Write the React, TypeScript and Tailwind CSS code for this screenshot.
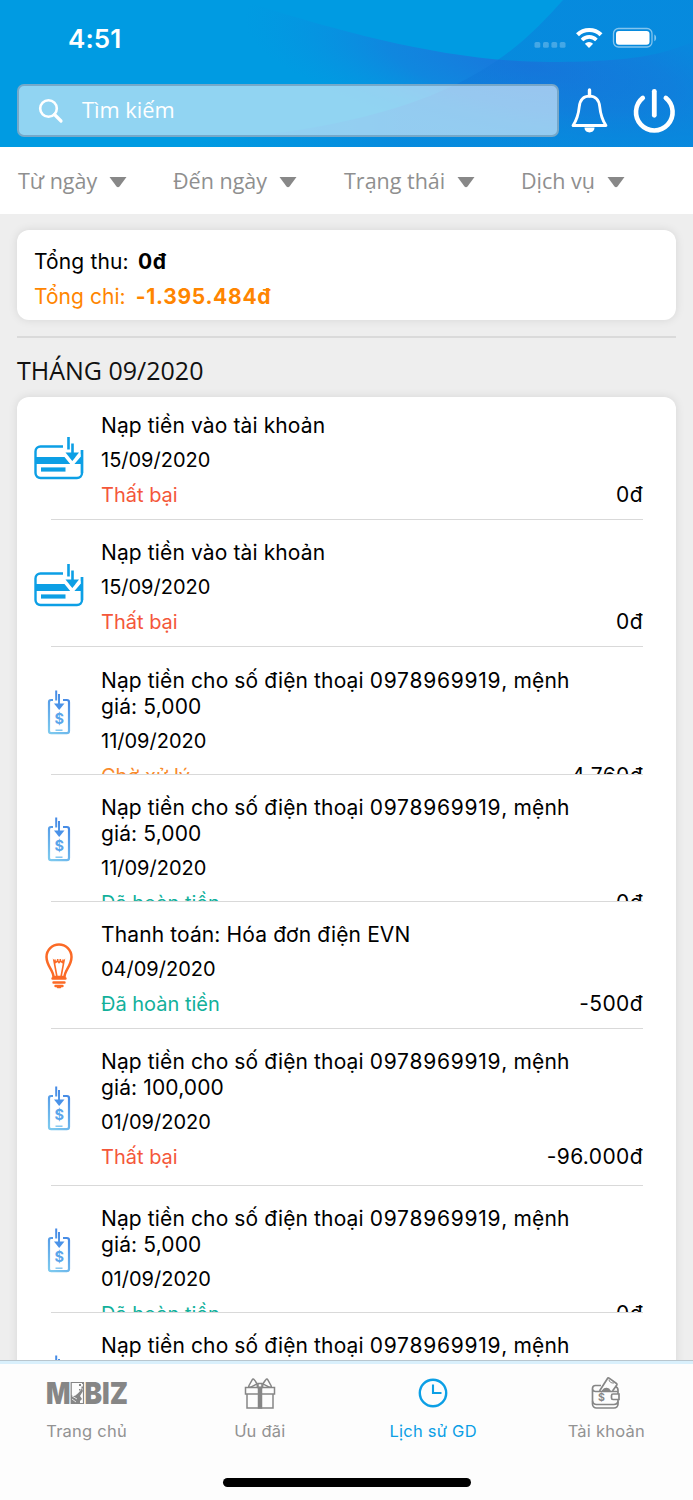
import type { ReactNode } from 'react';
import clsx from 'clsx';

type IconKind = 'card' | 'phone' | 'bulb';
type Status = 'failed' | 'pending' | 'refunded';

interface Transaction {
  icon: IconKind;
  title: string;
  phone?: string;
  note?: string;
  date: string;
  status: Status;
  amount: string;
  size: string;
}

const STATUS: Record<Status, { label: string; color: string }> = {
  failed: { label: 'Thất bại', color: 'text-[#f4573a]' },
  pending: { label: 'Chờ xử lý', color: 'text-[#f98a2b]' },
  refunded: { label: 'Đã hoàn tiền', color: 'text-[#12b09b]' },
};

const TOPUP = 'Nạp tiền cho số điện thoại ';

const transactions: Transaction[] = [
  { icon: 'card', title: 'Nạp tiền vào tài khoản', date: '15/09/2020', status: 'failed', amount: '0đ', size: 'h-[123px] pt-4' },
  { icon: 'card', title: 'Nạp tiền vào tài khoản', date: '15/09/2020', status: 'failed', amount: '0đ', size: 'h-[127px] pt-5' },
  { icon: 'phone', title: TOPUP, phone: '0978969919', note: ', mệnh giá: 5,000', date: '11/09/2020', status: 'pending', amount: '-4.760đ', size: 'h-[128px] pt-[21px]' },
  { icon: 'phone', title: TOPUP, phone: '0978969919', note: ', mệnh giá: 5,000', date: '11/09/2020', status: 'refunded', amount: '0đ', size: 'h-[127px] pt-5' },
  { icon: 'bulb', title: 'Thanh toán: Hóa đơn điện EVN', date: '04/09/2020', status: 'refunded', amount: '-500đ', size: 'h-[127px] pt-5' },
  { icon: 'phone', title: TOPUP, phone: '0978969919', note: ', mệnh giá: 100,000', date: '01/09/2020', status: 'failed', amount: '-96.000đ', size: 'h-[157px] pt-5' },
  { icon: 'phone', title: TOPUP, phone: '0978969919', note: ', mệnh giá: 5,000', date: '01/09/2020', status: 'refunded', amount: '0đ', size: 'h-[127px] pt-5' },
  { icon: 'phone', title: TOPUP, phone: '0978969919', note: ', mệnh giá: 5,000', date: '01/09/2020', status: 'refunded', amount: '0đ', size: 'h-[127px] pt-5' },
];

const filters = [
  { label: 'Từ ngày', width: 'w-[155px]' },
  { label: 'Đến ngày', width: 'w-[171px]' },
  { label: 'Trạng thái', width: 'w-[177px]' },
  { label: 'Dịch vụ', width: 'w-[150px]' },
];

function CardIcon() {
  return (
    <svg width="50" height="45" viewBox="0 0 50 45" fill="none" stroke="#0c9fe5">
      <path d="M29 10.500H6.500a5 5 0 0 0-5 5V37a5 5 0 0 0 5 5H43a5 5 0 0 0 5-5V14" strokeWidth="2.400" />
      <path d="M2 21h46v7H2Z" fill="#0c9fe5" stroke="none" />
      <path d="M31 18.500 38.300 27.500 46.500 18" stroke="#fff" strokeWidth="4" />
      <path d="M7 33.500h24.500" strokeWidth="4.200" />
      <path d="M34.500 1v12.500M38.500 7.500v10" strokeWidth="2.600" />
      <path d="M31.500 16.500h13.500L38.300 25Z" fill="#0c9fe5" stroke="none" />
      <path d="M48 14v23" strokeWidth="2.400" />
    </svg>
  );
}

function PhoneIcon() {
  return (
    <svg width="24" height="46" viewBox="0 0 24 46" fill="none">
      <defs>
        <linearGradient id="phoneBlue" x1="0" y1="40" x2="24" y2="8" gradientUnits="userSpaceOnUse">
          <stop stopColor="#7cc8ee" />
          <stop offset="1" stopColor="#3f83e4" />
        </linearGradient>
      </defs>
      <g stroke="url(#phoneBlue)">
        <path d="M6 11H4.200A2.200 2.200 0 0 0 2 13.200V42a2.200 2.200 0 0 0 2.200 2.200h15.600A2.200 2.200 0 0 0 22 42V13.200a2.200 2.200 0 0 0-2.200-2.200H16" strokeWidth="2.200" />
        <path d="M9.200 1.500v10M12 5v11" strokeWidth="2" />
        <path d="M8.500 41.200h7" strokeWidth="1.300" />
      </g>
      <path d="M7 14.500h10.500L12.200 21Z" fill="#4a92e8" />
      <text x="12.200" y="34.500" textAnchor="middle" fontFamily="Inter, sans-serif" fontSize="14.500" fontWeight="700" fill="#5aa6eb">$</text>
    </svg>
  );
}

function BulbIcon() {
  return (
    <svg width="28" height="46" viewBox="0 0 28 46" fill="none" stroke="#fb6a26">
      <path d="M8.500 34C8.500 27 1.500 23 1.500 14a12.500 12.500 0 0 1 25 0c0 9-7 13-7 20Z" strokeWidth="2.500" />
      <path d="M12 34 9 18l1.500 1.500 2-1.500 1.500 1.500 1.500-1.500 2 1.500L19 18l-3 16" strokeWidth="1.600" />
      <path d="M10 16.500v2.500M12.700 16v3M15.300 16v3M18 16.500v2.500" strokeWidth="1.600" />
      <path d="M7.500 35.500h13M8.500 39.500h11M10.500 43h7" strokeWidth="2.400" strokeLinecap="round" />
      <path d="M12.500 44.500h3" strokeWidth="1.500" strokeLinecap="round" />
    </svg>
  );
}

const ICONS: Record<IconKind, ReactNode> = {
  card: <CardIcon />,
  phone: <PhoneIcon />,
  bulb: <BulbIcon />,
};

function TransactionRow({ item, first }: { item: Transaction; first: boolean }) {
  const status = STATUS[item.status];
  return (
    <div className={clsx('relative flex shrink-0 overflow-hidden pl-[17px] pr-[33px]', item.size)}>
      <div className={clsx('-mt-5 flex w-[50px] items-center justify-center', first ? 'pt-1' : item.icon === 'card' ? 'pt-[3px]' : 'pt-px')}>
        {ICONS[item.icon]}
      </div>
      <div className="flex-1 pl-[17px] text-[21px] leading-[26px] tracking-[0.12px] text-black">
        <p className="w-[490px]">
          {item.title}
          {item.phone && <span className="tracking-[0.75px]">{item.phone}</span>}
          {item.note}
        </p>
        <p className="mt-2 text-[20px] tracking-normal">{item.date}</p>
        <div className="mt-[9px] flex justify-between">
          <span className={clsx('text-[20px] tracking-normal', status.color)}>{status.label}</span>
          <span className="tracking-[0.4px]">{item.amount}</span>
        </div>
      </div>
      <div className="absolute bottom-0 left-[34px] right-[33px] h-px bg-[#d9d9d9]" />
    </div>
  );
}

function HeaderBackground() {
  return (
    <svg className="absolute inset-0" width="693" height="147" viewBox="0 0 693 147">
      <defs>
        <radialGradient id="arcShade" cx="0" cy="0" r="1" gradientUnits="userSpaceOnUse" gradientTransform="translate(530 66) rotate(10) scale(290 80)">
          <stop stopColor="#1f6fdb" stopOpacity="0.85" />
          <stop offset="0.5" stopColor="#1a7add" stopOpacity="0.6" />
          <stop offset="1" stopColor="#0a8fe0" stopOpacity="0" />
        </radialGradient>
        <linearGradient id="sweepShade" x1="190" y1="0" x2="400" y2="0" gradientUnits="userSpaceOnUse">
          <stop stopColor="#0c7bd9" stopOpacity="0" />
          <stop offset="1" stopColor="#0f76d8" stopOpacity="0.45" />
        </linearGradient>
      </defs>
      <path d="M0 0h693v147H0Z" fill="#009be2" />
      <path d="M240 0C340 32 450 62 550 62S670 50 693 42V147H100L240 0Z" fill="url(#arcShade)" />
      <path d="M563 0C510 60 440 125 190 142v5H693V0Z" fill="url(#sweepShade)" />
    </svg>
  );
}

function StatusBar() {
  return (
    <div className="relative h-[84px]">
      <span className="absolute left-[68px] top-[23px] text-[26px] font-semibold leading-8 tracking-[0.1px]">4:51</span>
      <svg className="absolute left-[533px] top-[24px]" width="126" height="28" viewBox="0 0 126 28" fill="none">
        <g fill="#fff" fillOpacity="0.25">
          <rect x="1.500" y="18" width="5.800" height="5.800" rx="1.600" />
          <rect x="10" y="18" width="5.800" height="5.800" rx="1.600" />
          <rect x="18.400" y="18" width="5.800" height="5.800" rx="1.600" />
          <rect x="26.700" y="18" width="5.800" height="5.800" rx="1.600" />
        </g>
        <path d="M44.500 10.800a16.800 16.800 0 0 1 23.500 0" stroke="#fff" strokeWidth="4.200" />
        <path d="M49 15.900a10 10 0 0 1 14.400 0" stroke="#fff" strokeWidth="3.600" />
        <path d="M51.900 19.700a5.900 5.900 0 0 1 8.200 0L56 23.900Z" fill="#fff" />
        <rect x="80.500" y="4.500" width="38.500" height="18.500" rx="5" stroke="#fff" strokeOpacity="0.5" strokeWidth="1.300" />
        <rect x="83" y="7" width="33.500" height="13.700" rx="3" fill="#fff" />
        <path d="M121.300 10.500c2.400.8 2.400 6 0 6.800Z" fill="#fff" fillOpacity="0.5" />
      </svg>
    </div>
  );
}

function Header() {
  return (
    <header className="relative h-[147px] shrink-0 text-white">
      <HeaderBackground />
      <StatusBar />
      <div className="relative flex pl-[17px]">
        <div className="flex h-[53px] w-[542px] items-center rounded-[7px] border-2 border-[#6f9fbe]/80 bg-white/57 pl-[19px]">
          <svg width="26" height="26" viewBox="0 0 26 26" fill="none" stroke="#fff">
            <circle cx="10.500" cy="10.500" r="8.300" strokeWidth="2.600" />
            <path d="m16.500 16.500 6.500 6.500" strokeWidth="3.200" strokeLinecap="round" />
          </svg>
          <span className="ml-[18px] font-['Open_Sans',sans-serif] text-[21.800px]">Tìm kiếm</span>
        </div>
        <svg className="ml-3 mt-1" width="38" height="46" viewBox="0 0 38 46" fill="none" stroke="#fff">
          <path d="M18.500 2v6" strokeWidth="3.400" strokeLinecap="round" />
          <path d="M18.500 8.200c-6.500 0-9.500 4.500-10.200 10.300-.8 8-1.800 12.500-6.300 19h33c-4.500-6.500-5.500-11-6.300-19C28 12.700 25 8.200 18.500 8.200Z" strokeWidth="2.800" strokeLinejoin="round" />
          <path d="M13.500 39.500h10c0 6.500-10 6.500-10 0Z" fill="#fff" stroke="none" />
        </svg>
        <svg className="ml-[24px] mt-1" width="46" height="46" viewBox="0 0 46 46" fill="none" stroke="#fff" strokeLinecap="round">
          <path d="M21.300 3.300v24" strokeWidth="4.800" />
          <path d="M9.800 10.600a18.300 18.300 0 1 0 23 0" strokeWidth="4.600" transform="translate(0 -.7)" />
        </svg>
      </div>
    </header>
  );
}

function FilterBar() {
  return (
    <div className="flex h-[67px] shrink-0 items-center bg-white pl-[18px] pt-0.5 font-['Open_Sans',sans-serif] text-[21.500px] text-[#8f8f8f]">
      {filters.map((f) => (
        <button key={f.label} className={clsx('flex items-center gap-3 whitespace-nowrap', f.width)}>
          {f.label}
          <svg width="18" height="12" viewBox="0 0 18 12">
            <path d="M.500 1h17L10.500 10.500q-1.500 1.500-3 0Z" fill="#888" />
          </svg>
        </button>
      ))}
    </div>
  );
}

function MobizLogo() {
  return (
    <svg width="82" height="26" viewBox="0 0 82 26" fill="#868686">
      <g fontFamily="Inter, sans-serif" fontSize="30.500" fontWeight="900">
        <text x="0" y="24" textLength="24.500" lengthAdjust="spacingAndGlyphs">M</text>
        <text x="38.500" y="24" textLength="43.500" lengthAdjust="spacingAndGlyphs">BIZ</text>
      </g>
      <path d="M25.200 2.500h12.300v21H25.200Z" fill="none" stroke="#868686" strokeWidth="1.200" />
      <path d="M25 15c2 1 3 2 5 0s4-3 6-7l1 3-3 5 2 3-2 2v3H25Z" />
      <path d="m26 16 5 3m-5 0 4 3" stroke="#fdfdfd" strokeWidth=".8" />
      <path d="M33 4h2v2h-2Zm2.500 2.500h2v2h-2ZM33 9h1.500v1.500H33Zm3-7h1.500v2H36Z" />
    </svg>
  );
}

function GiftIcon() {
  return (
    <svg width="32" height="34" viewBox="0 0 32 34" fill="none" stroke="#868686" strokeWidth="1.500">
      <path d="M1.500 11.500h29v6.500h-29ZM3 18v14h26V18" />
      <path d="M14.500 11.500h3V32h-3Z" fill="#868686" />
      <path d="M13.500 11.500c0-3-1-5.500-3.500-8-.5-.6-1.300-.5-1.700.2L5 9.500c-.7 1.200 0 2 1.200 1.700 3-.700 5-3.200 7.800-3.200M18.500 11.500c0-3 1-5.500 3.500-8 .5-.6 1.300-.5 1.700.2L27 9.500c.7 1.200 0 2-1.200 1.700-3-.7-5-3.200-7.800-3.200" />
      <path d="M14 7.500h4v4h-4Z" />
    </svg>
  );
}

function ClockIcon() {
  return (
    <svg width="30" height="30" viewBox="0 0 30 30" fill="none" stroke="#0c9fe5">
      <circle cx="15" cy="15" r="13.200" strokeWidth="2.400" />
      <path d="M15 6.500V15h8.500" strokeWidth="2.100" />
    </svg>
  );
}

function WalletIcon() {
  return (
    <svg width="30" height="34" viewBox="0 0 30 34" fill="none" stroke="#868686" strokeWidth="1.700">
      <path d="M10 9.500H4.500a3 3 0 0 0-3 3V28a4 4 0 0 0 4 4H23a4 4 0 0 0 4-4v-4.500M24 10.500c2 .5 3 1.500 3 3.500v4" />
      <path d="M1.500 13.500c.5 1.500 1.500 2 3 2H27M1.500 25c.5 2.500 2 3.500 4 3.500H23c2 0 3.500-1 4-3" strokeWidth="1.500" />
      <path d="m8.500 15 8-12.500c.5-.8 1-.8 1.600-.4l7.400 5.400c.6.400.6 1 .3 1.500L21.500 15" />
      <path d="M12 14.500a4 4 0 0 1 7 .5Z" fill="#868686" />
      <path d="M18 3.500c0 2 2 4 5 3.500" strokeWidth="1" />
      <path d="M28 18h-6a1.500 1.500 0 0 0-1.500 1.500v2.500a1.500 1.500 0 0 0 1.500 1.500h6Z" />
      <text x="10.500" y="25.200" textAnchor="middle" fontFamily="Inter, sans-serif" fontSize="10.500" fontWeight="700" fill="#868686" stroke="none">$</text>
    </svg>
  );
}

const tabs = [
  { label: 'Trang chủ', icon: <MobizLogo />, active: false },
  { label: 'Ưu đãi', icon: <GiftIcon />, active: false },
  { label: 'Lịch sử GD', icon: <ClockIcon />, active: true },
  { label: 'Tài khoản', icon: <WalletIcon />, active: false },
];

function TabBar() {
  return (
    <nav className="relative h-[140px] shrink-0 border-t border-[#b9c6ce] bg-[#fdfdfd]">
      <div className="h-[3px] bg-[#d9f0fc]" />
      <div className="grid grid-cols-4">
        {tabs.map((tab) => (
          <div key={tab.label} className={clsx('flex flex-col items-center', tab.active ? 'text-[#0c9fe5]' : 'text-[#929292]')}>
            <div className="flex h-[57px] items-center">{tab.icon}</div>
            <span className="text-[16.500px] leading-5 tracking-[0.25px]">{tab.label}</span>
          </div>
        ))}
      </div>
      <div className="mx-auto mt-[37px] h-[9px] w-[248px] rounded-full bg-black" />
    </nav>
  );
}

export default function App() {
  return (
    <div className="flex h-[1500px] w-[693px] flex-col overflow-hidden bg-[#eeeeee] font-[Inter,sans-serif]">
      <Header />
      <FilterBar />
      <main className="flex min-h-0 flex-1 flex-col overflow-hidden px-[17px] pt-4">
        {/* Totals */}
        <section className="h-[90px] shrink-0 rounded-xl bg-white pl-[17px] pt-[14px] text-[21px] leading-[35px] shadow-[0_0_10px_rgba(0,0,0,0.1)]">
          <p className="tracking-[0.15px] text-black">
            Tổng thu: <b className="ml-[3px] font-bold tracking-[0.7px]">0đ</b>
          </p>
          <p className="tracking-[0.05px] text-[#ff8500]">
            Tổng chi: <b className="ml-1 font-bold tracking-[0.7px]">-1.395.484đ</b>
          </p>
        </section>
        <div className="mt-4 h-0.5 shrink-0 bg-[#dadada]" />

        {/* Month group */}
        <h2 className="mt-[14px] h-[45px] shrink-0 font-['Open_Sans',sans-serif] text-[25px] leading-[36px] text-[#111]">THÁNG 09/2020</h2>
        <section className="flex flex-col rounded-t-xl bg-white shadow-[0_0_10px_rgba(0,0,0,0.1)]">
          {transactions.map((item, i) => (
            <TransactionRow key={i} item={item} first={i === 0} />
          ))}
        </section>
      </main>
      <TabBar />
    </div>
  );
}
